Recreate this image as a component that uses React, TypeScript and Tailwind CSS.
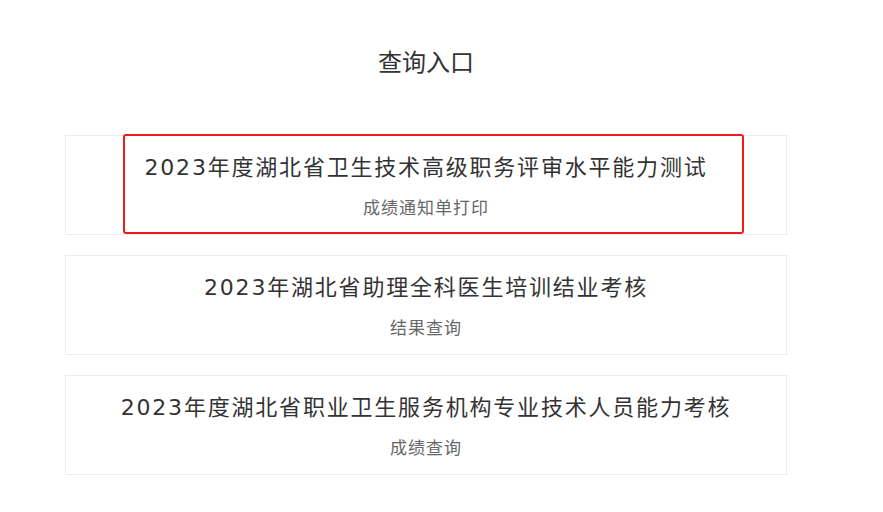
const items = [
  { title: "2023年度湖北省卫生技术高级职务评审水平能力测试", sub: "成绩通知单打印", marked: true },
  { title: "2023年湖北省助理全科医生培训结业考核", sub: "结果查询", marked: false },
  { title: "2023年度湖北省职业卫生服务机构专业技术人员能力考核", sub: "成绩查询", marked: false },
];

export default function App() {
  return (
    <div
      className="min-h-screen bg-white pl-[65px] pt-[46px]"
      style={{ fontFamily: '"Noto Sans CJK SC", "Noto Sans", sans-serif' }}
    >
      <div className="w-[722px]">
        <h1 className="text-center text-[24px] leading-[30px] text-[#333]">查询入口</h1>

        <div className="mt-[59px] flex flex-col gap-5">
          {items.map((it) => (
            <div
              key={it.title}
              className="relative flex h-[100px] flex-col items-center border border-[#ececec] bg-white pt-[17px]"
            >
              <div className="font-['DejaVu_Sans','Noto_Sans_CJK_SC',sans-serif] text-[22px] leading-[30px] tracking-[1.8px] text-[#333]">
                {it.title}
              </div>
              <div className="mt-[14px] text-[17px] leading-[20px] tracking-[1px] text-[#666]">{it.sub}</div>

              {/* red highlight marking */}
              {it.marked && (
                <div className="pointer-events-none absolute left-[57px] top-[-2px] h-[100px] w-[621px] rounded-[3px] border-2 border-[#ee1c1c]" />
              )}
            </div>
          ))}
        </div>
      </div>
    </div>
  );
}
